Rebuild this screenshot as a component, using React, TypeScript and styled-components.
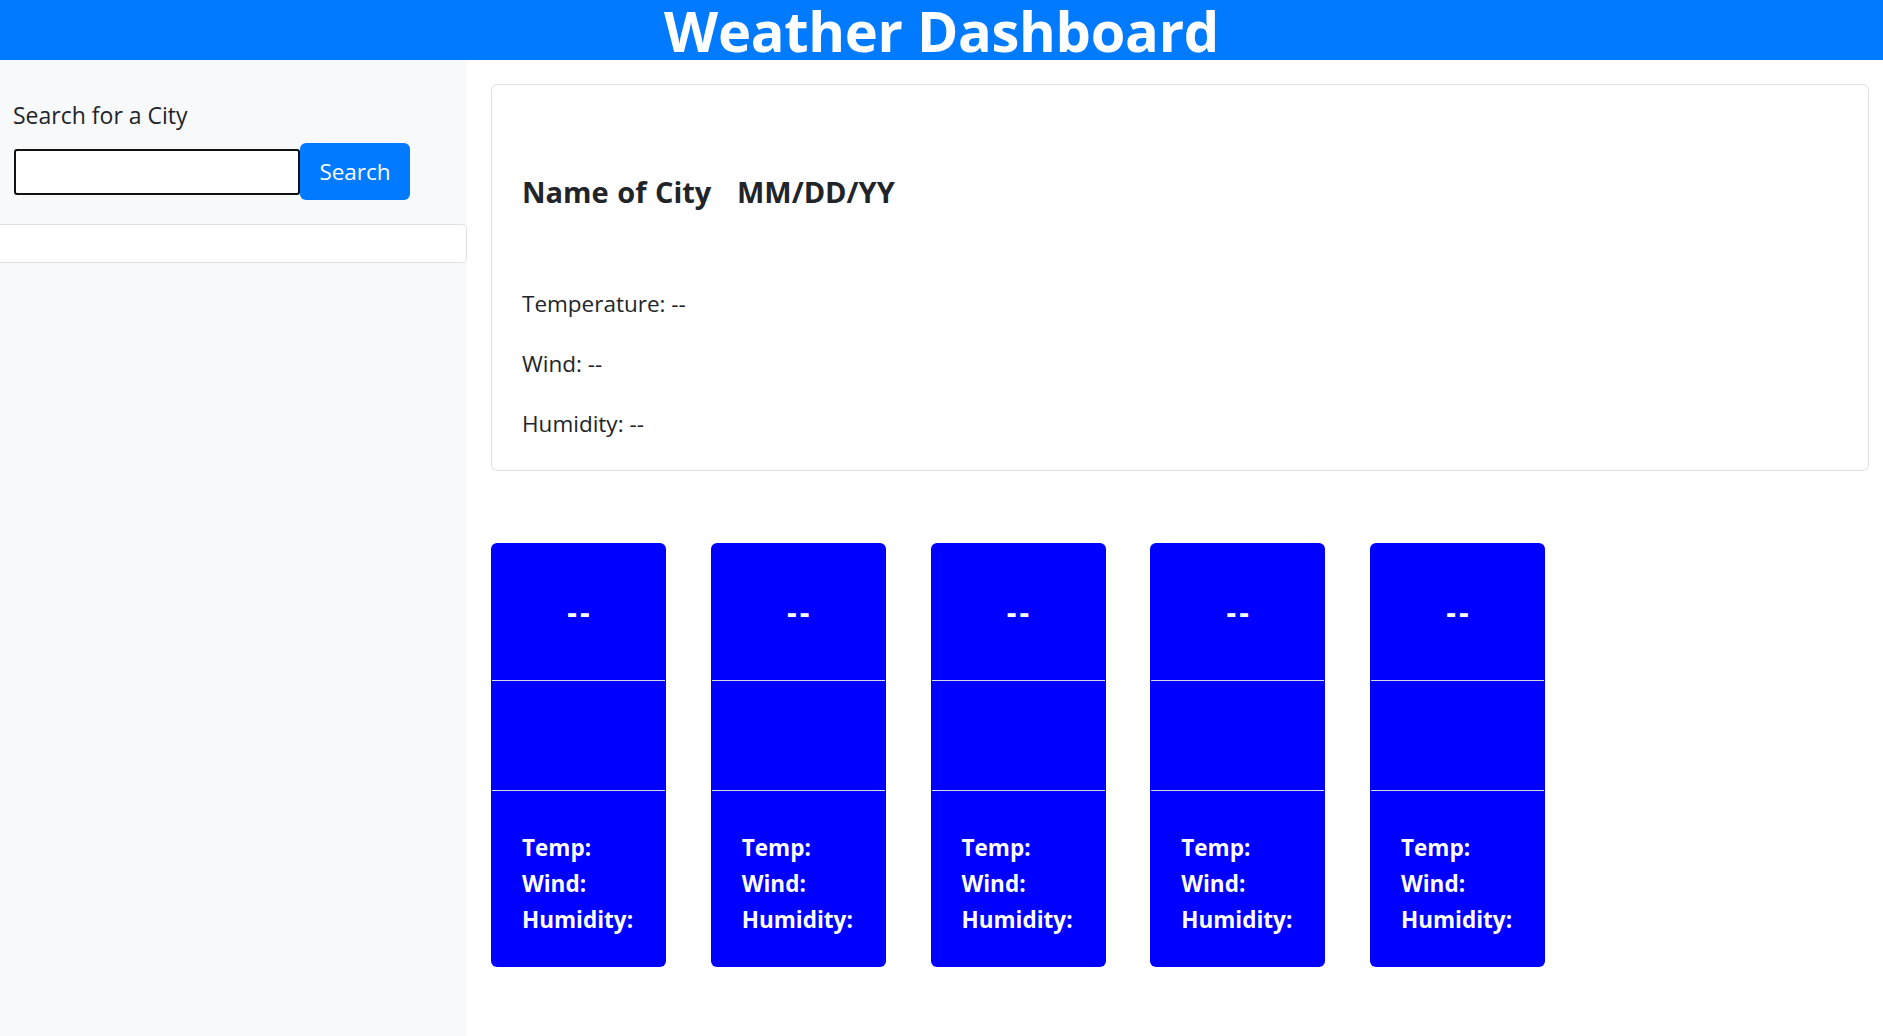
import React from "react";
import styled, { createGlobalStyle } from "styled-components";

const GlobalStyle = createGlobalStyle`
  html, body { margin: 0; padding: 0; }
  body {
    font-family: "Open Sans", "Noto Sans", sans-serif;
    color: #212529;
    background: #ffffff;
  }
  * { box-sizing: border-box; }
`;

const Header = styled.header`
  height: 60px;
  background: #007bff;
  display: flex;
  justify-content: center;
  align-items: center;
`;

const Title = styled.h1`
  margin: 0;
  color: #ffffff;
  font-size: 56px;
  font-weight: 700;
  line-height: 60px;
  letter-spacing: -0.3px;
`;

const Layout = styled.div`
  display: flex;
  min-height: calc(100vh - 60px);
`;

const Sidebar = styled.aside`
  width: 467px;
  flex-shrink: 0;
  background: #f8f9fa;
  padding-top: 37px;
`;

const SearchArea = styled.div`
  padding-left: 13px;
`;

const Label = styled.label`
  display: block;
  font-size: 23px;
  line-height: 36px;
  margin-bottom: 10px;
`;

const SearchRow = styled.div`
  display: flex;
  align-items: center;
`;

const Input = styled.input`
  width: 286px;
  height: 46px;
  margin-left: 1px;
  border: 2px solid #111;
  border-radius: 3px;
  background: #fff;
  font-size: 22px;
  padding: 0 6px;
  outline: none;
`;

const Button = styled.button`
  height: 57px;
  width: 110px;
  border: none;
  border-radius: 6px;
  background: #007bff;
  color: #fff;
  font-family: inherit;
  font-size: 22.5px;
  line-height: 36px;
  padding: 0;
  cursor: pointer;
`;

const HistoryList = styled.ul`
  margin: 24px 0 0;
  padding: 0;
  list-style: none;
  height: 39px;
  background: #fff;
  border: 1px solid #dfdfdf;
  border-left: none;
  border-radius: 0 5px 5px 0;
`;

const Main = styled.main`
  flex: 1;
  padding: 24px 14px 24px 24px;
`;

const CurrentCard = styled.section`
  border: 1px solid rgba(0, 0, 0, 0.125);
  border-radius: 6px;
  padding: 30px;
  height: 387px;
`;

const CityHeading = styled.h2`
  margin: 58px 0 75px;
  font-size: 29px;
  font-weight: 700;
  line-height: 38px;
  white-space: pre;
  word-spacing: 1px;
`;

const Stat = styled.p`
  margin: 0 0 24px;
  font-size: 22.5px;
  line-height: 36px;
`;

const ForecastRow = styled.div`
  display: flex;
  gap: 44.75px;
  margin-top: 72px;
`;

const ForecastCard = styled.article`
  width: 175px;
  height: 424px;
  background: #0000ff;
  border-radius: 6px;
  color: #fff;
  display: flex;
  flex-direction: column;
`;

const CardTop = styled.div`
  height: 137px;
  display: flex;
  justify-content: center;
  align-items: center;
  font-size: 30px;
  font-weight: 700;
  letter-spacing: 3px;
  padding-left: 3px;
`;

const Divider = styled.hr`
  margin: 0 1px;
  border: none;
  border-top: 1px solid #d6d6e6;
  height: 0;
`;

const CardIcon = styled.div`
  height: 109px;
`;

const CardStats = styled.div`
  flex: 1;
  padding: 39px 0 0 31px;
  font-size: 22.5px;
  font-weight: 700;
  line-height: 36px;
`;

const forecasts = [0, 1, 2, 3, 4];

export default function App() {
  return (
    <>
      <GlobalStyle />
      <Header>
        <Title>Weather Dashboard</Title>
      </Header>
      <Layout>
        <Sidebar>
          <SearchArea>
            <Label htmlFor="city">Search for a City</Label>
            <SearchRow>
              <Input id="city" type="text" />
              <Button type="button">Search</Button>
            </SearchRow>
          </SearchArea>
          <HistoryList />
        </Sidebar>
        <Main>
          <CurrentCard>
            <CityHeading>{"Name of City   MM/DD/YY"}</CityHeading>
            <Stat>Temperature: --</Stat>
            <Stat>Wind: --</Stat>
            <Stat>Humidity: --</Stat>
          </CurrentCard>
          <ForecastRow>
            {forecasts.map((i) => (
              <ForecastCard key={i}>
                <CardTop>--</CardTop>
                <Divider />
                <CardIcon />
                <Divider />
                <CardStats>
                  <div>Temp:</div>
                  <div>Wind:</div>
                  <div>Humidity:</div>
                </CardStats>
              </ForecastCard>
            ))}
          </ForecastRow>
        </Main>
      </Layout>
    </>
  );
}
